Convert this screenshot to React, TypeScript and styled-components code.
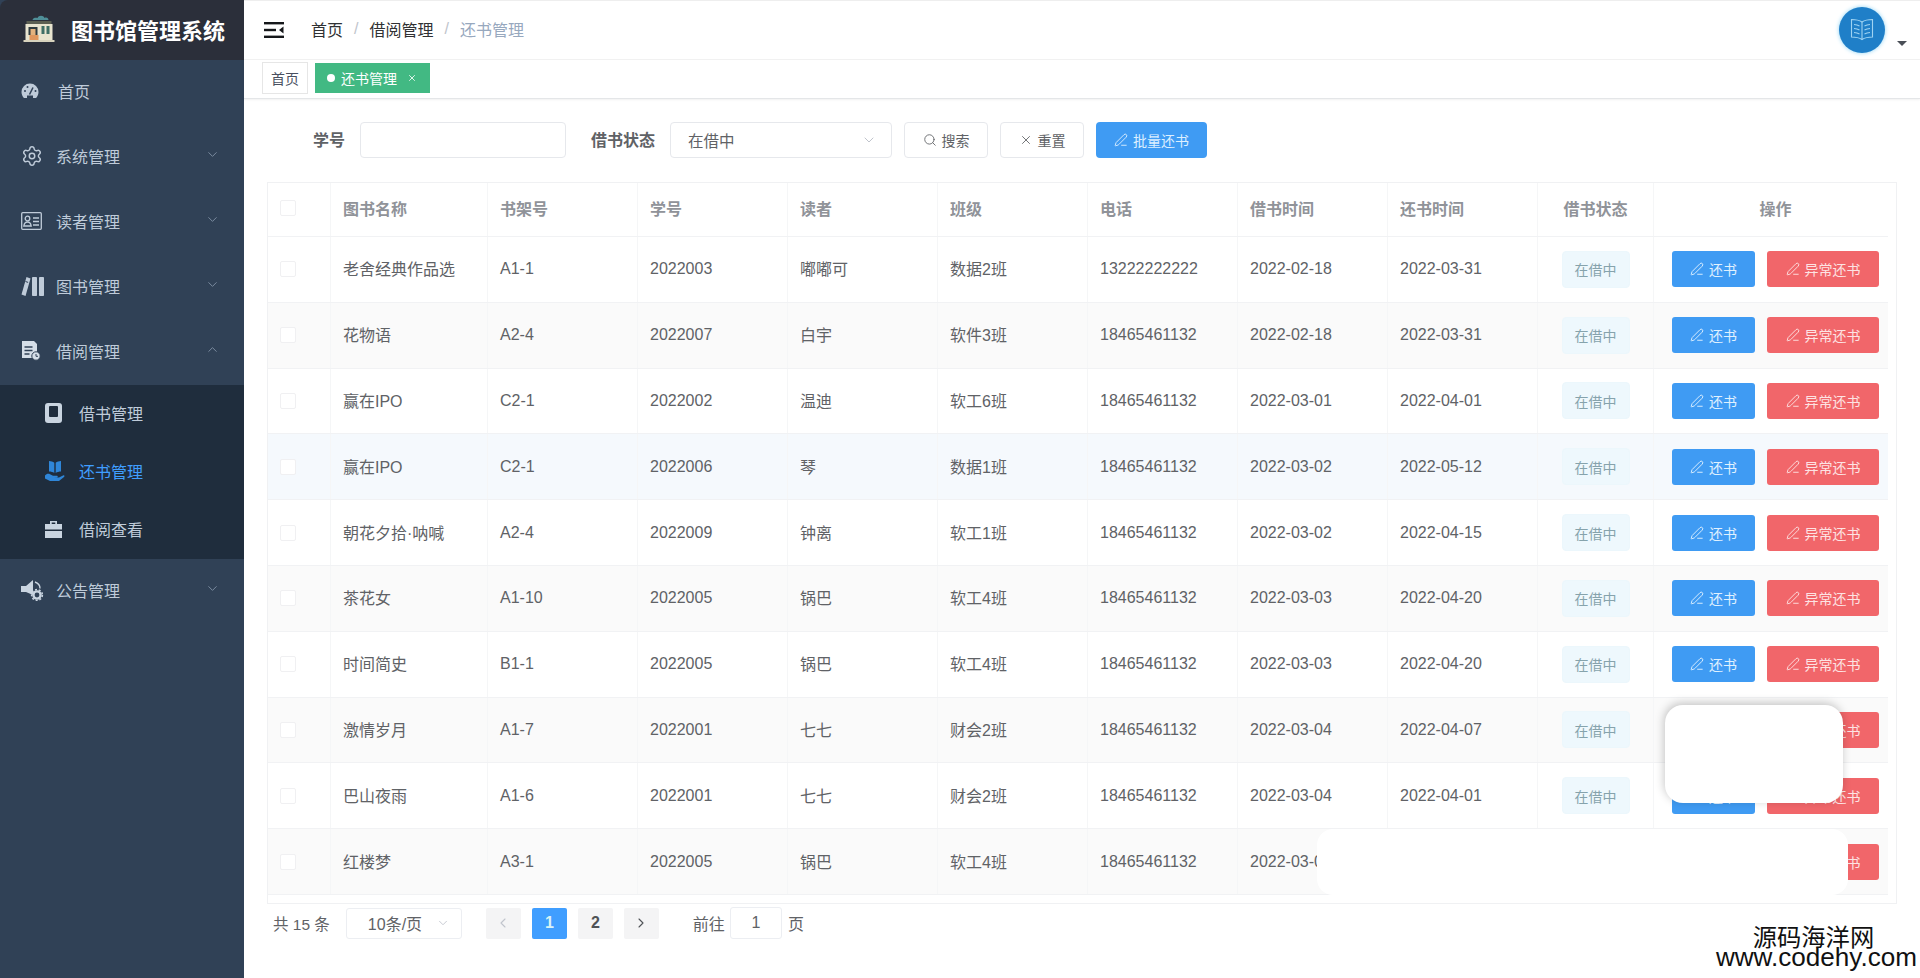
import React from "react";
import styled, { createGlobalStyle } from "styled-components";
import { ChevronDown, ChevronLeft, ChevronRight, ChevronUp, PenLine, Search, Settings, X } from "lucide-react";

const FONT = `"Liberation Sans", "Noto Sans CJK SC", sans-serif`;

const GlobalStyle = createGlobalStyle`
  html, body { margin: 0; padding: 0; background: #fff; }
  body { font-family: ${FONT}; font-size: 16px; color: #606266; }
  * { box-sizing: border-box; }
`;

const Page = styled.div`
  position: relative;
  display: flex;
  width: 1920px;
  height: 978px;
  overflow: hidden;
`;

/* sidebar */
const Sidebar = styled.aside`
  width: 244px;
  flex: none;
  background: #304156;
  color: #bfcbd9;
`;

const Brand = styled.div`
  height: 60px;
  display: flex;
  align-items: center;
  padding: 0 0 3px 22px;
  gap: 15px;
  background: #2b2f3a;
  border-top-left-radius: 8px;
  color: #fff;
  font-size: 22px;
  font-weight: 700;
`;

const MenuItem = styled.div<{ $inset?: number }>`
  height: 65px;
  display: flex;
  align-items: center;
  padding: 0 24px 3px 21px;
  span { margin-left: ${(p) => p.$inset ?? 0}px; }
`;

const IconSlot = styled.div`
  width: 35px;
  flex: none;
  display: flex;
  align-items: center;
`;

const MenuChevron = styled.div`
  margin-left: auto;
  margin-top: -3px;
  display: flex;
  color: #7f8fa3;
`;

const SubMenu = styled.div`
  background: #1f2d3d;
`;

const SubItem = styled.div<{ $active?: boolean }>`
  height: 58px;
  display: flex;
  align-items: center;
  padding: 0 0 2px 45px;
  color: ${(p) => (p.$active ? "#409eff" : "#bfcbd9")};
  ${IconSlot} { width: 34px; }
`;

/* main */
const Main = styled.main`
  flex: 1;
  min-width: 0;
  border-top: 1px solid #eee;
`;

const Navbar = styled.header`
  height: 59px;
  display: flex;
  align-items: center;
  padding-left: 20px;
  border-bottom: 1px solid #f2f2f2;
`;

const Crumbs = styled.nav`
  display: flex;
  align-items: center;
  margin-left: 27px;
  padding-bottom: 2px;
  color: #303133;
`;

const CrumbSep = styled.i`
  margin: 0 11px;
  font-style: normal;
  color: #c0c4cc;
`;

const CrumbLast = styled.span`
  color: #97a8be;
`;

const UserBox = styled.div`
  margin-left: auto;
  margin-right: 13px;
  display: flex;
  align-items: flex-end;
  gap: 12px;
`;

const Avatar = styled.div`
  width: 46px;
  height: 46px;
  margin-bottom: 1px;
  border-radius: 50%;
  background: #1f7fc8;
  box-shadow: 0 0 4px #8fd4f5;
  display: flex;
  align-items: center;
  justify-content: center;
`;

const Caret = styled.i`
  width: 0;
  height: 0;
  margin-bottom: 8px;
  border-left: 5px solid transparent;
  border-right: 5px solid transparent;
  border-top: 5px solid #4a4f57;
`;

const TagsBar = styled.div`
  height: 39px;
  display: flex;
  align-items: center;
  gap: 7px;
  padding: 0 0 2px 18px;
  border-bottom: 1px solid #e4e6e8;
  box-shadow: 0 1px 2px rgba(0, 0, 0, 0.06);
`;

const TagItem = styled.div<{ $active?: boolean }>`
  height: ${(p) => (p.$active ? 30 : 32)}px;
  padding: ${(p) => (p.$active ? "0 12px 0 11px" : "0 8px")};
  display: flex;
  align-items: center;
  font-size: 14px;
  color: ${(p) => (p.$active ? "#fff" : "#495060")};
  background: ${(p) => (p.$active ? "#42b983" : "#fff")};
  border: 1px solid ${(p) => (p.$active ? "#42b983" : "#e6e6e6")};
`;

const TagDot = styled.i`
  width: 8px;
  height: 8px;
  border-radius: 50%;
  background: #fff;
  margin-right: 6px;
`;

const TagClose = styled.span`
  display: flex;
  margin-left: 10px;
`;

const Content = styled.section`
  padding: 23px 0 0 23px;
`;

const FilterBar = styled.form`
  display: flex;
  align-items: center;
  padding-left: 46px;
  margin: 0;
`;

const FilterLabel = styled.label<{ $gapBefore?: number }>`
  margin: 0 15px 2px ${(p) => p.$gapBefore ?? 0}px;
  font-weight: 700;
  color: #5f6266;
`;

const TextInput = styled.input`
  width: 206px;
  height: 36px;
  border: 1px solid #e6e8ec;
  border-radius: 4px;
  background: #fff;
  outline: none;
`;

const SelectBox = styled.div`
  width: 222px;
  height: 36px;
  display: flex;
  align-items: center;
  justify-content: space-between;
  padding: 0 14px 0 17px;
  margin-right: 12px;
  border: 1px solid #e6e8ec;
  border-radius: 4px;
  font-size: 15.5px;
  color: #606266;
  svg { color: #c0c4cc; }
`;

const PlainButton = styled.button`
  width: 84px;
  height: 36px;
  margin-right: 12px;
  display: flex;
  align-items: center;
  justify-content: center;
  gap: 5px;
  padding: 0;
  border: 1px solid #e6e8ec;
  border-radius: 4px;
  background: #fff;
  color: #606266;
  font: 14px ${FONT};
`;

const BatchButton = styled.button`
  width: 111px;
  height: 36px;
  display: flex;
  align-items: center;
  justify-content: center;
  gap: 5px;
  padding: 0;
  border: none;
  border-radius: 4px;
  background: #3f9bf3;
  color: #dcefff;
  font: 14px ${FONT};
`;

const TableWrap = styled.div`
  position: relative;
  width: 1630px;
  height: 722px;
  margin-top: 24px;
  border: 1px solid #f0f1f3;
`;

const Row = styled.div<{ $head?: boolean; $tone?: string }>`
  display: grid;
  grid-template-columns: 63px 157px repeat(7, 150px) 116px 234px;
  width: 1620px;
  height: ${(p) => (p.$head ? "54px" : "65.8px")};
  background: ${(p) => p.$tone ?? "#fff"};
  border-bottom: 1px solid #f1f2f4;
`;

const Cell = styled.div<{ $head?: boolean; $center?: boolean; $cjk?: boolean }>`
  display: flex;
  align-items: center;
  justify-content: ${(p) => (p.$center ? "center" : "flex-start")};
  padding-left: ${(p) => (p.$center ? 0 : 12)}px;
  padding-bottom: ${(p) => (p.$head ? 4 : p.$cjk ? 2 : 0)}px;
  border-right: 1px solid #f5f6f7;
  color: ${(p) => (p.$head ? "#909399" : "#606266")};
  font-weight: ${(p) => (p.$head ? 700 : 400)};
  white-space: nowrap;
`;

const HeadActions = styled(Cell)`
  justify-content: center;
  padding-left: 9px;
  border-right: none;
`;

const Actions = styled(Cell)`
  gap: 12px;
  padding-left: 18px;
  border-right: none;
`;

const Check = styled.i`
  width: 16px;
  height: 16px;
  border: 1px solid #f0f0f2;
  border-radius: 2px;
  background: #fff;
`;

const StatusTag = styled.span`
  width: 68px;
  height: 37px;
  display: flex;
  align-items: center;
  justify-content: center;
  border-radius: 4px;
  border: 1px solid #ecf7fc;
  background: #eef8fd;
  color: #86a3ac;
  font-size: 14px;
`;

const ActionButton = styled.button<{ $danger?: boolean }>`
  width: ${(p) => (p.$danger ? 112 : 83)}px;
  height: 36px;
  display: flex;
  align-items: center;
  justify-content: center;
  gap: 5px;
  padding: 0;
  border: none;
  border-radius: 3px;
  background: ${(p) => (p.$danger ? "#f1666a" : "#3f9bf3")};
  color: ${(p) => (p.$danger ? "#fde3e3" : "#e0f1ff")};
  font: 14px ${FONT};
`;

/* white patches pasted over the shot */
const Sticker = styled.div`
  position: absolute;
  left: 1397px;
  top: 522px;
  width: 178px;
  height: 98px;
  border-radius: 18px;
  background: #fff;
  box-shadow: -1px -2px 10px rgba(0, 0, 0, 0.22);
`;

const RowPatch = styled.div`
  position: absolute;
  left: 1049px;
  top: 646px;
  width: 531px;
  height: 66px;
  border-radius: 16px;
  background: #fff;
`;

const Pager = styled.div`
  height: 32px;
  margin-top: 3px;
  display: flex;
  align-items: center;
  padding-left: 6px;
  color: #606266;
`;

const PagerTotal = styled.span`
  font-size: 15.5px;
`;

const PageSize = styled.div`
  width: 116px;
  height: 31px;
  margin: 0 24px 0 16px;
  display: flex;
  align-items: center;
  justify-content: space-between;
  padding: 0 11px 0 21px;
  border: 1px solid #eceef2;
  border-radius: 3px;
  svg { color: #c0c4cc; }
`;

const PageButton = styled.div<{ $active?: boolean; $muted?: boolean }>`
  width: 35px;
  height: 31px;
  margin-right: 11px;
  display: flex;
  align-items: center;
  justify-content: center;
  border-radius: 2px;
  background: ${(p) => (p.$active ? "#409eff" : "#f4f4f5")};
  color: ${(p) => (p.$active ? "#d9f3f5" : p.$muted ? "#c0c4cc" : "#4f5256")};
  font-weight: 700;
`;

const JumpText = styled.span<{ $left?: number }>`
  margin-left: ${(p) => p.$left ?? 0}px;
`;

const JumpInput = styled.input`
  width: 52px;
  height: 32px;
  margin: 0 6px 0 5px;
  border: 1px solid #eceef2;
  border-radius: 3px;
  text-align: center;
  color: #606266;
  font: 16px ${FONT};
  outline: none;
`;

const Watermark = styled.div`
  position: absolute;
  right: 3px;
  bottom: 13px;
  display: flex;
  flex-direction: column;
  align-items: center;
  color: #111;
`;

const WatermarkCn = styled.div`
  font-size: 24.3px;
  line-height: 24px;
  margin-right: 6px;
`;

const WatermarkUrl = styled.div`
  font-size: 26.1px;
  line-height: 15px;
`;

/* drawings */
const Logo = () => (
  <svg width="34" height="30" viewBox="0 0 33 30">
    <path d="M10 6c1-3 4-2 5-2 1-3 6-3 7 0 2-1 4 0 4 2z" fill="#4f8f98" />
    <rect x="4" y="7" width="25" height="3" fill="#5b5f52" />
    <rect x="3" y="10" width="27" height="16" fill="#e8e4cf" />
    <rect x="6" y="13" width="9" height="8" fill="#2e3b3f" />
    <rect x="8" y="15" width="5" height="6" fill="#e3b27d" />
    <rect x="19" y="12" width="3" height="8" fill="#3f6f66" />
    <rect x="24" y="12" width="3" height="8" fill="#3f6f66" />
    <rect x="7" y="21" width="9" height="5" fill="#e0975d" />
    <rect x="1" y="26" width="31" height="2" fill="#d8d3bd" />
  </svg>
);

const GaugeIcon = () => (
  <svg width="18" height="16" viewBox="0 0 18 16">
    <path d="M9 .5A8.5 8.5 0 0 0 .5 9c0 2.4 1 4.6 2.4 6h12.2c1.4-1.4 2.4-3.6 2.4-6A8.5 8.5 0 0 0 9 .5z" fill="#bfcbd9" />
    <path d="M8.5 11.5 12 4.5" stroke="#304156" strokeWidth="1.6" />
    <circle cx="4" cy="8" r="1" fill="#304156" />
    <circle cx="6.5" cy="4" r="1" fill="#304156" />
    <circle cx="14.5" cy="8" r="1" fill="#304156" />
    <path d="M6 15v-2.500h6V15" fill="#304156" />
  </svg>
);

const CardIcon = () => (
  <svg width="21" height="18" viewBox="0 0 21 18" fill="none" stroke="#bfcbd9" strokeWidth="1.3">
    <rect x=".7" y=".7" width="19.600" height="16.600" rx="1" />
    <circle cx="6.500" cy="6.500" r="2.300" />
    <path d="M2.800 14c.4-2.600 2-4 3.700-4s3.300 1.400 3.700 4z" />
    <path d="M12 6h6M12 9.500h6M12 13h6" />
  </svg>
);

const BooksIcon = () => (
  <svg width="24" height="20" viewBox="0 0 24 20" fill="#bfcbd9">
    <path d="M5.500 1 9.500 2.500 4.500 20 0.500 18.500z" />
    <rect x="11" y="1" width="5" height="19" rx=".8" />
    <rect x="18" y="1" width="5" height="19" rx=".8" />
    <path d="M4.500 5.500l2.600.9" stroke="#304156" strokeWidth="1" />
  </svg>
);

const DocClockIcon = () => (
  <svg width="20" height="20" viewBox="0 0 20 20">
    <path d="M1 0h12l3 3v14H1z" fill="#d5dee8" />
    <path d="M3.500 6h8M3.500 9.500h8M3.500 13h5" stroke="#304156" strokeWidth="1.300" />
    <circle cx="15" cy="15" r="4.200" fill="#d5dee8" stroke="#304156" strokeWidth="1" />
    <path d="M15 13v2.300h2" stroke="#304156" strokeWidth="1" fill="none" />
  </svg>
);

const BookIcon = () => (
  <svg width="17" height="20" viewBox="0 0 17 20">
    <rect width="17" height="20" rx="3" fill="#c9d4e0" />
    <rect x="4" y="3" width="9" height="11" rx="1" fill="#1f2d3d" />
  </svg>
);

const HandBookIcon = () => (
  <svg width="20" height="21" viewBox="0 0 20 21" fill="#2f86d8">
    <path d="M4 0c2 0 4 .8 5.300 1.800V12C8 11 6 10.500 4 10.500z" />
    <path d="M16 0c-2 0-4 .8-5.300 1.800V12c1.300-1 3.300-1.500 5.300-1.500z" />
    <path d="M0 14.500c1.500-1.800 3.500-2 5-1.200l3 1.500h4c1 0 1 1.500 0 1.500H9l5 .2 4-2c1.500-.6 2 .8 1 1.600L14 20H5l-5-2.500z" />
  </svg>
);

const CaseIcon = () => (
  <svg width="17" height="18" viewBox="0 0 17 18" fill="#c9d4e0">
    <path d="M5 4V1h7v3h-1.700V2.600H6.700V4z" />
    <rect y="4" width="17" height="5.500" />
    <rect y="11" width="17" height="7" />
  </svg>
);

const NoticeIcon = () => (
  <svg width="23" height="22" viewBox="0 0 23 22">
    <path d="M0 7h5l7-6v15L5 13H0z" fill="#c9d4e0" />
    <path d="M14 3c3 1 5 3.500 5 6.500" fill="none" stroke="#c9d4e0" strokeWidth="1.400" />
    <circle cx="16" cy="16" r="3.600" fill="none" stroke="#c9d4e0" strokeWidth="2.400" />
    <circle cx="16" cy="16" r="5.400" fill="none" stroke="#c9d4e0" strokeWidth="1.500" strokeDasharray="2 1.800" />
  </svg>
);

const OutdentIcon = () => (
  <svg width="20" height="18" viewBox="0 0 20 18" fill="#15171a">
    <rect y="1" width="20" height="2.400" />
    <rect y="7.800" width="12" height="2.400" />
    <rect y="14.600" width="20" height="2.400" />
    <path d="M19.500 5.500v7L15 9z" />
  </svg>
);

const AvatarBook = () => (
  <svg width="28" height="28" viewBox="0 0 28 28" fill="none" stroke="#9fd3f2" strokeWidth="1.100">
    <path d="M14 6C11 4 7 3.500 3.500 3.500V21c3.500 0 7.500.6 10.500 2.500 3-1.900 7-2.500 10.500-2.500V3.500C21 3.500 17 4 14 6z" />
    <path d="M14 6v17.500M6 8.500c2 .1 4 .6 5.500 1.400M6 12.500c2 .1 4 .6 5.500 1.400M6 16.500c2 .1 4 .6 5.500 1.400M22 8.500c-2 .1-4 .6-5.500 1.400M22 12.500c-2 .1-4 .6-5.500 1.400M22 16.500c-2 .1-4 .6-5.500 1.400" />
  </svg>
);

const columns = ["图书名称", "书架号", "学号", "读者", "班级", "电话", "借书时间", "还书时间"];

const PHONE = "18465461132";
const rows = [
  ["老舍经典作品选", "A1-1", "2022003", "嘟嘟可", "数据2班", "13222222222", "2022-02-18", "2022-03-31"],
  ["花物语", "A2-4", "2022007", "白宇", "软件3班", PHONE, "2022-02-18", "2022-03-31"],
  ["赢在IPO", "C2-1", "2022002", "温迪", "软工6班", PHONE, "2022-03-01", "2022-04-01"],
  ["赢在IPO", "C2-1", "2022006", "琴", "数据1班", PHONE, "2022-03-02", "2022-05-12"],
  ["朝花夕拾·呐喊", "A2-4", "2022009", "钟离", "软工1班", PHONE, "2022-03-02", "2022-04-15"],
  ["茶花女", "A1-10", "2022005", "锅巴", "软工4班", PHONE, "2022-03-03", "2022-04-20"],
  ["时间简史", "B1-1", "2022005", "锅巴", "软工4班", PHONE, "2022-03-03", "2022-04-20"],
  ["激情岁月", "A1-7", "2022001", "七七", "财会2班", PHONE, "2022-03-04", "2022-04-07"],
  ["巴山夜雨", "A1-6", "2022001", "七七", "财会2班", PHONE, "2022-03-04", "2022-04-01"],
  ["红楼梦", "A3-1", "2022005", "锅巴", "软工4班", PHONE, "2022-03-04", ""],
];

// columns holding Chinese text sit a little low in their line box
const CJK_COLUMNS = [0, 3, 4];

const rowTone = (i: number) => {
  if (i === 3) return "#f5f9fd";
  return i % 2 === 1 ? "#fafafa" : "#fff";
};

const menuBefore = [
  { label: "系统管理", icon: <Settings size={22} strokeWidth={1.6} color="#bfcbd9" /> },
  { label: "读者管理", icon: <CardIcon /> },
  { label: "图书管理", icon: <BooksIcon /> },
];

const subMenu = [
  { label: "借书管理", icon: <BookIcon /> },
  { label: "还书管理", icon: <HandBookIcon />, active: true },
  { label: "借阅查看", icon: <CaseIcon /> },
];

export default function App() {
  return (
    <Page>
      <GlobalStyle />
      <Sidebar>
        <Brand>
          <Logo />
          图书馆管理系统
        </Brand>
        <MenuItem $inset={2}>
          <IconSlot>
            <GaugeIcon />
          </IconSlot>
          <span>首页</span>
        </MenuItem>
        {menuBefore.map((m) => (
          <MenuItem key={m.label}>
            <IconSlot>{m.icon}</IconSlot>
            <span>{m.label}</span>
            <MenuChevron>
              <ChevronDown size={15} strokeWidth={1.5} />
            </MenuChevron>
          </MenuItem>
        ))}
        <MenuItem>
          <IconSlot>
            <DocClockIcon />
          </IconSlot>
          <span>借阅管理</span>
          <MenuChevron>
            <ChevronUp size={15} strokeWidth={1.5} />
          </MenuChevron>
        </MenuItem>
        <SubMenu>
          {subMenu.map((s) => (
            <SubItem key={s.label} $active={s.active}>
              <IconSlot>{s.icon}</IconSlot>
              <span>{s.label}</span>
            </SubItem>
          ))}
        </SubMenu>
        <MenuItem>
          <IconSlot>
            <NoticeIcon />
          </IconSlot>
          <span>公告管理</span>
          <MenuChevron>
            <ChevronDown size={15} strokeWidth={1.5} />
          </MenuChevron>
        </MenuItem>
      </Sidebar>

      <Main>
        <Navbar>
          <OutdentIcon />
          <Crumbs>
            <span>首页</span>
            <CrumbSep>/</CrumbSep>
            <span>借阅管理</span>
            <CrumbSep>/</CrumbSep>
            <CrumbLast>还书管理</CrumbLast>
          </Crumbs>
          <UserBox>
            <Avatar>
              <AvatarBook />
            </Avatar>
            <Caret />
          </UserBox>
        </Navbar>

        <TagsBar>
          <TagItem>首页</TagItem>
          <TagItem $active>
            <TagDot />
            还书管理
            <TagClose>
              <X size={10} strokeWidth={2} />
            </TagClose>
          </TagItem>
        </TagsBar>

        <Content>
          <FilterBar>
            <FilterLabel>学号</FilterLabel>
            <TextInput />
            <FilterLabel $gapBefore={25}>借书状态</FilterLabel>
            <SelectBox>
              在借中
              <ChevronDown size={16} strokeWidth={1.5} />
            </SelectBox>
            <PlainButton type="button">
              <Search size={14} strokeWidth={1.5} />
              搜索
            </PlainButton>
            <PlainButton type="button">
              <X size={14} strokeWidth={1.5} />
              重置
            </PlainButton>
            <BatchButton type="button">
              <PenLine size={14} strokeWidth={1.6} />
              批量还书
            </BatchButton>
          </FilterBar>

          <TableWrap>
            <Row $head>
              <Cell $head>
                <Check />
              </Cell>
              {columns.map((c) => (
                <Cell $head key={c}>
                  {c}
                </Cell>
              ))}
              <Cell $head $center>
                借书状态
              </Cell>
              <HeadActions $head>操作</HeadActions>
            </Row>
            {rows.map((r, i) => (
              <Row key={i} $tone={rowTone(i)}>
                <Cell>
                  <Check />
                </Cell>
                {r.map((v, j) => (
                  <Cell key={j} $cjk={CJK_COLUMNS.includes(j)}>
                    {v}
                  </Cell>
                ))}
                <Cell $center>
                  <StatusTag>在借中</StatusTag>
                </Cell>
                <Actions>
                  <ActionButton type="button">
                    <PenLine size={14} strokeWidth={1.6} />
                    还书
                  </ActionButton>
                  <ActionButton type="button" $danger>
                    <PenLine size={14} strokeWidth={1.6} />
                    异常还书
                  </ActionButton>
                </Actions>
              </Row>
            ))}
            <Sticker />
            <RowPatch />
          </TableWrap>

          <Pager>
            <PagerTotal>共 15 条</PagerTotal>
            <PageSize>
              10条/页
              <ChevronDown size={14} strokeWidth={1.5} />
            </PageSize>
            <PageButton $muted>
              <ChevronLeft size={16} strokeWidth={1.6} />
            </PageButton>
            <PageButton $active>1</PageButton>
            <PageButton>2</PageButton>
            <PageButton>
              <ChevronRight size={16} strokeWidth={1.6} />
            </PageButton>
            <JumpText $left={23}>前往</JumpText>
            <JumpInput defaultValue="1" />
            <JumpText>页</JumpText>
          </Pager>
        </Content>
      </Main>

      <Watermark>
        <WatermarkCn>源码海洋网</WatermarkCn>
        <WatermarkUrl>www.codehy.com</WatermarkUrl>
      </Watermark>
    </Page>
  );
}
